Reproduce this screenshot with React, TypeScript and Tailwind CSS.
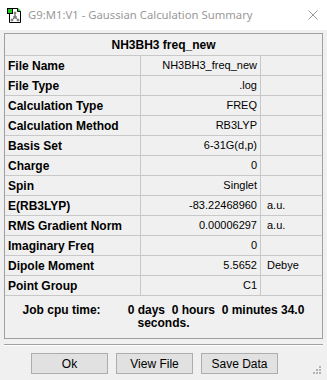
const rows: { label: string; value: string; unit?: string }[] = [
  { label: 'File Name', value: 'NH3BH3_freq_new' },
  { label: 'File Type', value: '.log' },
  { label: 'Calculation Type', value: 'FREQ' },
  { label: 'Calculation Method', value: 'RB3LYP' },
  { label: 'Basis Set', value: '6-31G(d,p)' },
  { label: 'Charge', value: '0' },
  { label: 'Spin', value: 'Singlet' },
  { label: 'E(RB3LYP)', value: '-83.22468960', unit: 'a.u.' },
  { label: 'RMS Gradient Norm', value: '0.00006297', unit: 'a.u.' },
  { label: 'Imaginary Freq', value: '0' },
  { label: 'Dipole Moment', value: '5.5652', unit: 'Debye' },
  { label: 'Point Group', value: 'C1' },
];

function AppIcon() {
  return (
    <svg width="16" height="17" viewBox="0 0 16 17">
      <path d="M2.5 1.5h8l3 3v11h-11z" fill="#fff" stroke="#000" />
      <path d="M10.5 1.5v3h3" fill="none" stroke="#000" />
      <path d="M11 1l3 3h-3z" fill="#22c922" />
      <rect x="0.5" y="1.5" width="5" height="5" fill="#22c922" stroke="#000" />
      <g stroke="#777" strokeWidth="1" fill="#888">
        <line x1="8" y1="6" x2="8" y2="10" />
        <line x1="8" y1="10" x2="5" y2="13" />
        <line x1="8" y1="10" x2="11" y2="13" />
        <circle cx="8" cy="10" r="1.3" />
        <circle cx="8" cy="6" r="1" />
        <circle cx="5" cy="13" r="1" />
        <circle cx="11" cy="13" r="1" />
      </g>
    </svg>
  );
}

function Button({ label }: { label: string }) {
  return (
    <button className="h-[21px] w-[77px] border border-[#adadad] bg-[#e1e1e1] text-[12px] leading-none text-black">
      {label}
    </button>
  );
}

export default function App() {
  return (
    <div
      className="relative h-[380px] w-[327px] overflow-hidden bg-[#f0f0f0]"
      style={{ fontFamily: '"Liberation Sans", Arial, sans-serif' }}
    >
      {/* title bar */}
      <div className="flex h-[30px] items-center bg-white">
        <div className="ml-[7px] flex h-[16px] w-[16px] items-center">
          <AppIcon />
        </div>
        <span
          className="ml-[5px] text-[11.3px] text-[#999999]"
          style={{ fontFamily: '"Noto Sans", "Open Sans", sans-serif' }}
        >
          G9:M1:V1 - Gaussian Calculation Summary
        </span>
        <svg className="ml-auto mr-[9px]" width="10" height="10" viewBox="0 0 10 10">
          <path d="M0.5 0.5l9 9M9.5 0.5l-9 9" stroke="#999" strokeWidth="1" />
        </svg>
      </div>

      {/* table */}
      <div className="ml-[4px] mt-[3px] w-[319px] border border-[#a0a0a0] text-[11px] text-black">
        <div className="flex h-[22px] items-center justify-center border-b border-[#c8c8c8] text-[12px] font-bold">
          NH3BH3 freq_new
        </div>
        {rows.map((r) => (
          <div key={r.label} className="flex h-[20px] border-b border-[#c8c8c8]">
            <div className="flex w-[136px] items-center border-r border-[#c8c8c8] pl-[3px] text-[12px] font-bold">
              {r.label}
            </div>
            <div className="flex w-[120px] items-center justify-end border-r border-[#c8c8c8] pr-[3px]">
              {r.value}
            </div>
            <div className="flex flex-1 items-center pl-[6px]">{r.unit}</div>
          </div>
        ))}
        <div className="flex h-[42px] flex-col items-center justify-center text-[12px] font-bold leading-[13px]">
          <div className="whitespace-pre">
            <span>Job cpu time:</span>
            <span className="ml-[27px]">0 days  0 hours  0 minutes 34.0</span>
          </div>
          <div>seconds.</div>
        </div>
      </div>

      {/* etched separator */}
      <div className="ml-[4px] mt-[5px] w-[319px] border-t border-b border-t-[#a0a0a0] border-b-white" />

      {/* buttons */}
      <div className="mt-[7px] flex gap-[8px] pl-[31px]">
        <Button label="Ok" />
        <Button label="View File" />
        <Button label="Save Data" />
      </div>

      {/* resize grip */}
      <svg className="absolute bottom-[6px] right-[6px]" width="8" height="8" viewBox="0 0 8 8">
        <g fill="#b4b4b4">
          <rect x="6" y="0" width="2" height="2" />
          <rect x="3" y="3" width="2" height="2" />
          <rect x="6" y="3" width="2" height="2" />
          <rect x="0" y="6" width="2" height="2" />
          <rect x="3" y="6" width="2" height="2" />
          <rect x="6" y="6" width="2" height="2" />
        </g>
      </svg>
    </div>
  );
}
